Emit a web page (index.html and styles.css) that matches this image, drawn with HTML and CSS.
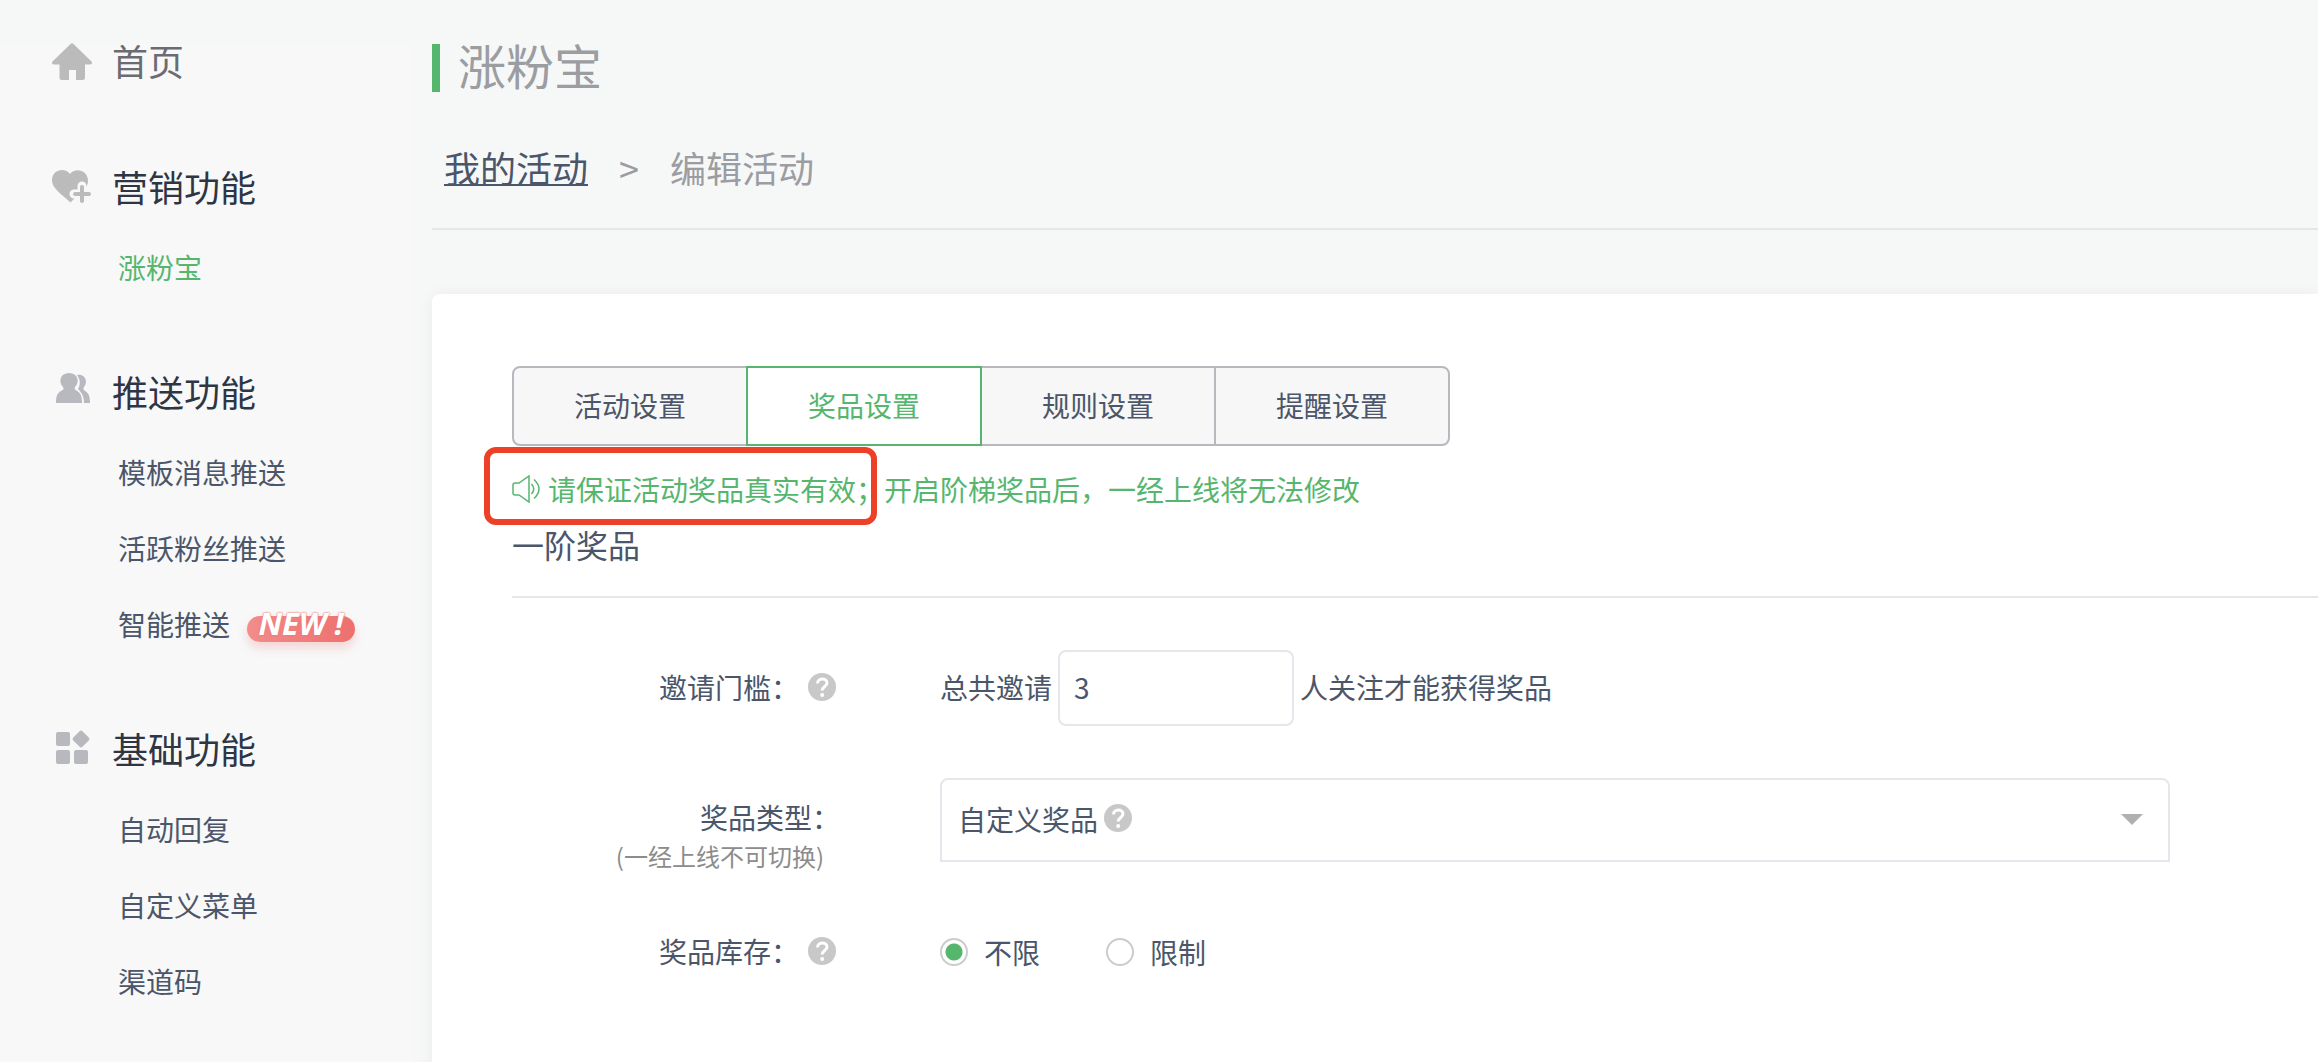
FILE: index.html
```html
<!DOCTYPE html>
<html lang="zh-CN">
<head>
    <meta charset="UTF-8">
    <meta name="viewport" content="width=device-width, initial-scale=1.0">
    <title>涨粉宝 - 编辑活动</title>
    <link rel="stylesheet" href="styles.css">
</head>
<body>
    <svg class="sprite" aria-hidden="true">
        <symbol id="help" viewBox="0 0 28 28">
            <circle cx="14" cy="14" r="14" fill="#c8c8c8"/>
            <path d="M9.500 10.500 C9.500 4.500 19 4.500 19 10 C19 13.500 14.200 13.500 14.200 17.500" fill="none" stroke="#fff" stroke-width="3"/>
            <circle cx="14.200" cy="22" r="2" fill="#fff"/>
        </symbol>
    </svg>

    <div class="page">
        <aside class="sidebar">
            <nav class="menu">
                <a class="menu-title home" href="#">
                    <svg class="menu-icon" viewBox="0 -2 40 40">
                        <path d="M18.500 2 Q20 0.600 21.500 2 L39.500 19.500 Q41 22.500 38 22.500 H33 V35.500 Q33 38 30.500 38 H24 V28 H17 V38 H10 Q7.500 38 7.500 35.500 V22.500 H2 Q-1 22.500 0.500 19.500 Z" fill="#bbb"/>
                    </svg>
                    首页
                </a>

                <section class="menu-group">
                    <h2 class="menu-title">
                        <svg class="menu-icon" viewBox="0 -2 40 40">
                            <path d="M18 6 C23 -0.500 36 1.500 36 13 C36 20 30 23 18.500 34.500 C7 24 0 20 0 12 C0 1.500 13 -1 18 6 Z" fill="#bbb"/>
                            <path d="M30 18 V34 M22 26 H38" stroke="#f8f8f8" stroke-width="9" stroke-linecap="round"/>
                            <path d="M30 19 V33 M23 26 H37" stroke="#bbb" stroke-width="4" stroke-linecap="round"/>
                        </svg>
                        营销功能
                    </h2>
                    <ul class="menu-list">
                        <li><a class="active" href="#">涨粉宝</a></li>
                    </ul>
                </section>

                <section class="menu-group">
                    <h2 class="menu-title">
                        <svg class="menu-icon" viewBox="0 0 40 40">
                            <g fill="#b8b9bf">
                                <path d="M25 4 C32 2 37 10 32 16 C31 17.500 31 18.500 33 20 C37 22 38 26 38 32 H32 C32 26 30 22 26 18 C29 13 28 8 25 4 Z"/>
                                <path d="M17 2 C26 2 28 11 23 16 C22 18 23 18.500 25 20 C29 22 30 26 30 32 H4 C4 26 5 22 9 20 C12 18.500 12 18 11 16 C6 11 8 2 17 2 Z"/>
                            </g>
                        </svg>
                        推送功能
                    </h2>
                    <ul class="menu-list">
                        <li><a href="#">模板消息推送</a></li>
                        <li><a href="#">活跃粉丝推送</a></li>
                        <li><a href="#">智能推送</a><span class="new-tag">NEW !</span></li>
                    </ul>
                </section>

                <section class="menu-group">
                    <h2 class="menu-title">
                        <svg class="menu-icon" viewBox="0 0 40 40">
                            <g fill="#b8b9bf">
                                <rect x="4" y="4" width="14" height="14" rx="2"/>
                                <rect x="4" y="22" width="14" height="14" rx="2"/>
                                <rect x="22" y="22" width="14" height="14" rx="2"/>
                                <rect x="22.500" y="4.500" width="13" height="13" rx="2" transform="rotate(45 29 11)"/>
                            </g>
                        </svg>
                        基础功能
                    </h2>
                    <ul class="menu-list">
                        <li><a href="#">自动回复</a></li>
                        <li><a href="#">自定义菜单</a></li>
                        <li><a href="#">渠道码</a></li>
                    </ul>
                </section>
            </nav>
        </aside>

        <main class="main">
            <header class="header">
                <h1>涨粉宝</h1>
                <div class="breadcrumb">
                    <a href="#">我的活动</a>
                    <span>&gt;</span>
                    <span>编辑活动</span>
                </div>
            </header>

            <div class="card">
                <div class="tabs">
                    <button type="button">活动设置</button>
                    <button type="button" class="active">奖品设置</button>
                    <button type="button">规则设置</button>
                    <button type="button">提醒设置</button>
                </div>

                <div class="notice">
                    <svg class="horn" viewBox="0 0 28 28" fill="none" stroke="#57b66e" stroke-width="1.500">
                        <path d="M1 10 Q1 8 3 8 H7 L17 1 V27 L7 20 H3 Q1 20 1 18 Z"/>
                        <path d="M19.500 9 Q24 14 19.500 19"/>
                        <path d="M22 4.500 Q32 14 22 23.500"/>
                    </svg>
                    <p>请保证活动奖品真实有效；开启阶梯奖品后，一经上线将无法修改</p>
                    <div class="mark"></div>
                </div>

                <h2 class="section-title">一阶奖品</h2>

                <form class="form">
                    <div class="row">
                        <div class="label">
                            <label for="threshold">邀请门槛：</label>
                            <svg class="help"><use href="#help"/></svg>
                        </div>
                        <div class="field">
                            <span>总共邀请</span>
                            <input type="text" id="threshold" value="3">
                            <span>人关注才能获得奖品</span>
                        </div>
                    </div>

                    <div class="row">
                        <div class="label stacked">
                            <label for="prizeType">奖品类型：</label>
                            <small>(一经上线不可切换)</small>
                        </div>
                        <div class="field select">
                            <select id="prizeType">
                                <option>自定义奖品</option>
                            </select>
                            <svg class="help"><use href="#help"/></svg>
                            <svg class="arrow" viewBox="0 0 22 11"><path d="M0 0 H22 L11 11 Z" fill="#b0b0b0"/></svg>
                        </div>
                    </div>

                    <div class="row">
                        <div class="label">
                            <span>奖品库存：</span>
                            <svg class="help"><use href="#help"/></svg>
                        </div>
                        <div class="field radios">
                            <label><input type="radio" name="stock" checked>不限</label>
                            <label><input type="radio" name="stock">限制</label>
                        </div>
                    </div>
                </form>
            </div>
        </main>
    </div>
</body>
</html>
```

FILE: styles.css
```css
* {
    box-sizing: border-box;
}
body {
    margin: 0;
    background-color: #f6f8f7;
    color: #4b566b;
    font-family: "Noto Sans CJK SC", sans-serif;
    font-size: 28px;
    line-height: 40px;
}
h1, h2, p, ul {
    margin: 0;
    padding: 0;
    font-weight: 400;
}
a {
    color: inherit;
    text-decoration: none;
}
.sprite {
    display: none;
}
.page {
    display: flex;
    gap: 20px;
    min-height: 100vh;
    padding-top: 44px;
}

/* sidebar */
.sidebar {
    flex: 0 0 412px;
    background-color: #f8f8f8;
}
.menu {
    margin-top: -14px;
}
.menu-title {
    display: flex;
    align-items: center;
    gap: 20px;
    padding-left: 52px;
    color: #2e3543;
    font-size: 36px;
    line-height: 60px;
}
.menu-title.home {
    margin-bottom: 66px;
    color: #6b6c72;
}
.menu-icon {
    width: 40px;
    height: 40px;
    overflow: visible;
}
.menu-group {
    margin-bottom: 56px;
}
.menu-list {
    margin-top: 13px;
    padding-left: 118px;
    list-style: none;
}
.menu-list li {
    display: flex;
    align-items: center;
    gap: 17px;
    height: 76px;
}
.menu-list .active {
    color: #57b66e;
}
.new-tag {
    width: 108px;
    height: 26px;
    margin-top: 10px;
    border-radius: 13px;
    background: linear-gradient(90deg, #f28d8a, #ed706e);
    box-shadow: 0 6px 10px rgba(237, 112, 110, 0.25);
    color: #fff;
    font: italic 700 31px/14px "Noto Sans", sans-serif;
    text-align: center;
    text-shadow: 0 0 2px #ee7a76, 0 0 2px #ee7a76;
}

/* page header */
.main {
    display: flex;
    flex: 1;
    flex-direction: column;
    min-width: 0;
}
.header {
    padding-bottom: 33px;
    border-bottom: 2px solid #e4e6ea;
}
.header h1 {
    padding: 0 0 8px 18px;
    border-left: 8px solid #57b66e;
    color: #9b9da2;
    font-size: 48px;
    line-height: 40px;
}
.breadcrumb {
    display: flex;
    gap: 31px;
    margin-top: 47px;
    padding-left: 12px;
    color: #9b9da2;
    font-size: 36px;
    line-height: 56px;
}
.breadcrumb a {
    color: #4b566b;
    text-decoration: underline;
    text-decoration-thickness: 2px;
}

/* content card */
.card {
    flex: 1;
    margin-top: 64px;
    padding: 72px 0 0 80px;
    border-radius: 8px 0 0 0;
    background-color: #fff;
    box-shadow: 0 0 16px rgba(0, 0, 0, 0.05);
}
.tabs {
    display: flex;
}
.tabs button {
    width: 236px;
    height: 80px;
    padding: 0 0 2px;
    border: 2px solid #b8b8be;
    background-color: #f7f7f7;
    color: #4b566b;
    font: inherit;
}
.tabs button + button {
    margin-left: -2px;
}
.tabs button:first-child {
    border-radius: 8px 0 0 8px;
}
.tabs button:last-child {
    border-radius: 0 8px 8px 0;
}
.tabs .active {
    z-index: 1;
    border-color: #57b66e;
    background-color: #fff;
    color: #57b66e;
}
.notice {
    position: relative;
    display: flex;
    align-items: center;
    gap: 8px;
    margin-top: 23px;
    color: #57b66e;
}
.horn {
    width: 28px;
    height: 28px;
}
.mark {
    position: absolute;
    top: -22px;
    left: -28px;
    width: 393px;
    height: 78px;
    border: 6px solid #ec4127;
    border-radius: 12px;
}
.section-title {
    margin-top: 11px;
    padding-bottom: 28px;
    border-bottom: 2px solid #e6e6ec;
    font-size: 32px;
    line-height: 48px;
}

/* prize form */
.form {
    display: grid;
    gap: 52px;
    padding: 52px 148px 52px 0;
}
.row {
    display: grid;
    grid-template-columns: 328px 1fr;
    gap: 100px;
}
.label {
    display: flex;
    align-items: center;
    justify-content: flex-end;
    gap: 9px;
    padding: 0 4px 3px 0;
}
.label.stacked {
    display: block;
    padding: 19px 0 1px;
    text-align: right;
}
.label small {
    display: block;
    padding-right: 16px;
    color: #8c8c8c;
    font-size: 24px;
    line-height: 38px;
}
.help {
    width: 28px;
    height: 28px;
}
.field {
    display: flex;
    align-items: center;
    gap: 6px;
}
.field span {
    padding-bottom: 2px;
}
.field input[type="text"] {
    width: 236px;
    height: 76px;
    padding: 0 14px 2px;
    border: 2px solid #e6e6ec;
    border-radius: 8px;
    background-color: #fff;
    color: inherit;
    font: inherit;
}
.select {
    position: relative;
    align-self: start;
}
.select select {
    width: 100%;
    height: 84px;
    padding: 0 16px 2px;
    border: 2px solid #e6e6ec;
    border-radius: 8px 8px 0 0;
    background-color: #fff;
    color: inherit;
    font: inherit;
    appearance: none;
}
.select .help {
    position: absolute;
    top: 26px;
    left: 164px;
}
.arrow {
    position: absolute;
    top: 36px;
    right: 27px;
    width: 22px;
    height: 11px;
}
.radios {
    gap: 66px;
    height: 48px;
}
.radios label {
    display: flex;
    align-items: center;
    gap: 16px;
}
.radios input {
    width: 28px;
    height: 28px;
    margin: 0;
    border: 2px solid #ccc;
    border-radius: 50%;
    background-color: #fff;
    appearance: none;
}
.radios input:checked {
    background: radial-gradient(circle, #57b66e 8px, #fff 9px);
}
```
